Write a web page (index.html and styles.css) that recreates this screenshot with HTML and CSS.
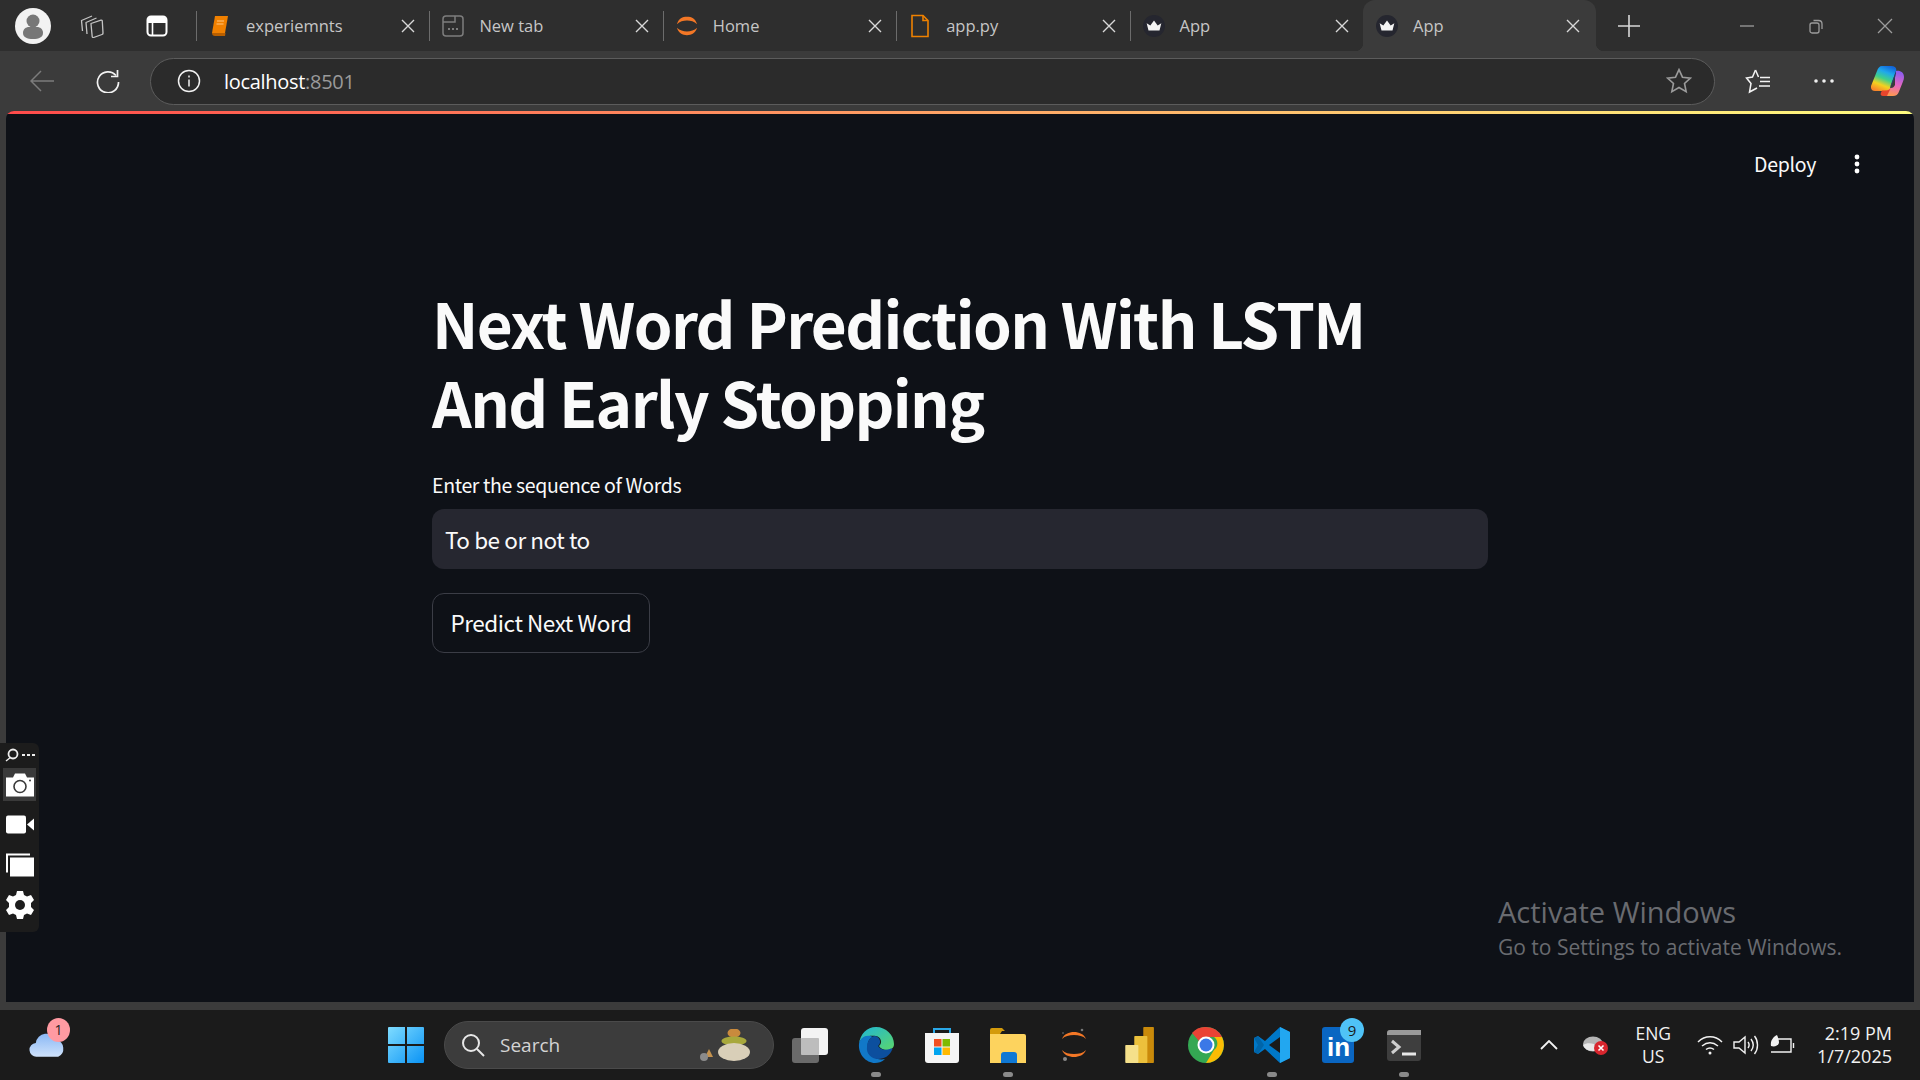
FILE: index.html
```html
<!DOCTYPE html>
<html lang="en">
<head>
  <meta charset="UTF-8" />
  <title>App</title>
  <link rel="stylesheet" href="styles.css">
</head>
<body>
  <div class="tabstrip">
    <div class="strip-btn profile-slot">
      <svg class="profile" viewBox="0 0 36 36"><circle cx="18" cy="18" r="18" fill="#f2f2f2"/><circle cx="18" cy="13" r="6.5" fill="#777"/><path d="M8 25c0-4 3-6 6-6h8c3 0 6 2 6 6 0 4-4 6-10 6S8 29 8 25z" fill="#777"/></svg>
    </div>
    <div class="strip-btn workspace-slot">
      <svg class="icon-24" viewBox="0 0 24 24" fill="none" stroke="#c4c4c4" stroke-width="1.300" stroke-linejoin="round"><path d="M11 9.500 21 6.200a1 1 0 0 1 1.300 1L23 19a1.500 1.500 0 0 1-1 1.500L13.500 23.500a1 1 0 0 1-1.300-1L11 10z"/><path d="M7 20 6 8.500 16.500 4"/><path d="M2.500 17 1.500 6.500 12 2"/></svg>
    </div>
    <div class="strip-btn vtabs-slot">
      <svg class="icon-24" viewBox="0 0 24 24" fill="none" stroke="#fff" stroke-width="2"><rect x="2.500" y="2.500" width="19" height="19" rx="3.500"/><path d="M7.500 8v13" stroke-width="1.600"/><path d="M3 5.500a2.500 2.500 0 0 1 2.500-2.500h13a2.500 2.500 0 0 1 2.500 2.500V9H3z" fill="#fff" stroke="none"/></svg>
    </div>

    <div class="tab">
      <svg class="tab-icon" viewBox="0 0 20 24"><path d="M5 2h13l-3 17H2z" fill="#f08000"/><path d="M2 19c0 2 1 3 3 3h10l.5-3z" fill="#b85f00"/><path d="M7 7h7M6.500 10h7" stroke="#ffc680" stroke-width="1.200"/></svg>
      <span class="tab-title">experiemnts</span>
      <svg class="tab-close" viewBox="0 0 14 14"><path d="M1 1l12 12M13 1L1 13"/></svg>
    </div>
    <div class="tab">
      <svg class="tab-icon" viewBox="0 0 22 24" fill="none" stroke="#7d7d7d" stroke-width="1.500"><rect x="1" y="2" width="20" height="20" rx="3"/><path d="M1 8h12V2"/><path d="M6 15h2M10 15h2M14 15h2" stroke-width="1.800"/></svg>
      <span class="tab-title">New tab</span>
      <svg class="tab-close" viewBox="0 0 14 14"><path d="M1 1l12 12M13 1L1 13"/></svg>
    </div>
    <div class="tab">
      <svg class="tab-icon" viewBox="0 0 24 24" fill="#f37726"><path d="M1 10C3 4 7 2 12 2s9 2 11 8c-3-3-7-4-11-4S4 7 1 10z"/><path d="M1 14c3 3 7 4 11 4s8-1 11-4c-2 6-6 8-11 8S3 20 1 14z"/></svg>
      <span class="tab-title">Home</span>
      <svg class="tab-close" viewBox="0 0 14 14"><path d="M1 1l12 12M13 1L1 13"/></svg>
    </div>
    <div class="tab">
      <svg class="tab-icon" viewBox="0 0 20 24" fill="none" stroke="#ee8100" stroke-width="1.600"><path d="M2 1.500h11l5 5v16H2z"/><path d="M13 1.500v5h5" /></svg>
      <span class="tab-title">app.py</span>
      <svg class="tab-close" viewBox="0 0 14 14"><path d="M1 1l12 12M13 1L1 13"/></svg>
    </div>
    <div class="tab">
      <svg class="tab-icon" viewBox="0 0 24 24"><circle cx="12" cy="12" r="12" fill="#25262f"/><path d="M4 9l4 2.500L12 6l4 5.500L20 9l-2 8H6z" fill="#f4f4f4"/></svg>
      <span class="tab-title">App</span>
      <svg class="tab-close" viewBox="0 0 14 14"><path d="M1 1l12 12M13 1L1 13"/></svg>
    </div>
    <div class="tab active">
      <svg class="tab-icon" viewBox="0 0 24 24"><circle cx="12" cy="12" r="12" fill="#25262f"/><path d="M4 9l4 2.500L12 6l4 5.500L20 9l-2 8H6z" fill="#f4f4f4"/></svg>
      <span class="tab-title">App</span>
      <svg class="tab-close" viewBox="0 0 14 14"><path d="M1 1l12 12M13 1L1 13"/></svg>
    </div>

    <svg class="new-tab" viewBox="0 0 22 22"><path d="M11 0v22M0 11h22"/></svg>
    <div class="window-controls">
      <svg class="win-btn" viewBox="0 0 16 16"><path d="M1 8h14"/></svg>
      <svg class="win-btn" viewBox="0 0 16 16"><rect x="2" y="5" width="9" height="10" rx="2"/><path d="M5.500 2.500h5c2 0 3.500 1.500 3.500 3.500v5"/></svg>
      <svg class="win-btn" viewBox="0 0 16 16"><path d="M1 1l14 14M15 1L1 15"/></svg>
    </div>
  </div>

  <div class="toolbar">
    <div class="tool-slot back-slot">
      <svg class="icon-24" viewBox="0 0 24 24" fill="none" stroke="#7c7c7c" stroke-width="1.500"><path d="M24 12H1M11 2 1 12l10 10"/></svg>
    </div>
    <div class="tool-slot reload-slot">
      <svg class="icon-24" viewBox="0 0 24 24" fill="none" stroke="#f2f2f2" stroke-width="1.700"><path d="M20 6.500A10.500 10.500 0 1 0 22.500 13"/><path d="M21.500 1v6.500H15"/></svg>
    </div>
    <div class="address-bar">
      <svg class="icon-24" viewBox="0 0 24 24" fill="none" stroke="#f2f2f2" stroke-width="1.500"><circle cx="12" cy="12" r="10.500"/><path d="M12 10.500v7M12 6.500v2"/></svg>
      <span class="url"><span class="url-host">localhost</span>:8501</span>
      <svg class="fav-star" viewBox="0 0 24 24" fill="none" stroke="#9a9a9a" stroke-width="1.500"><path d="M12 1.500l3.200 7 7.300.8-5.400 5 1.500 7.500-6.600-3.800-6.600 3.800L6.900 14.300l-5.400-5 7.300-.8z"/></svg>
    </div>
    <div class="tool-slot favorites-slot">
      <svg class="icon-26" viewBox="0 0 26 26" fill="none" stroke="#f4f4f4" stroke-width="1.500"><path d="M10.500 2 7.500 9 1.500 10 6 15.500 4.500 24 12 20"/><path d="M10.500 2 13.500 9"/><path d="M15 9.500h10M15 13.500h10M14 18h11"/></svg>
    </div>
    <div class="tool-slot more-slot">
      <svg class="icon-24" viewBox="0 0 24 24" fill="#f0f0f0"><circle cx="4" cy="12" r="1.800"/><circle cx="12" cy="12" r="1.800"/><circle cx="20" cy="12" r="1.800"/></svg>
    </div>
    <div class="tool-slot copilot-slot">
      <svg class="copilot" viewBox="0 0 33 30">
        <defs>
          <linearGradient id="cpA" x1="0.700" y1="0" x2="0.300" y2="1"><stop offset="0" stop-color="#1268dc"/><stop offset="0.250" stop-color="#1fa8ec"/><stop offset="0.500" stop-color="#3fd08a"/><stop offset="0.750" stop-color="#f4d21f"/><stop offset="1" stop-color="#f9862a"/></linearGradient>
          <linearGradient id="cpB" x1="0.600" y1="0" x2="0.400" y2="1"><stop offset="0" stop-color="#8a5cf0"/><stop offset="0.550" stop-color="#e868c0"/><stop offset="1" stop-color="#ff9a4c"/></linearGradient>
        </defs>
        <path d="M24 5c5-1 9 1 9 6 0 1.500-.3 3-1 4.500l-4 10c-1 3-3 4.500-6 4.500H12l4-8h4c2 0 3-1 4-3z" fill="url(#cpB)"/>
        <path d="M11 0h9c4 0 6 2 5 5l-6 17c-1 2-3 3-5 3H4c-3 0-4.500-2-4-5L6 5c1-3 2.500-5 5-5z" fill="url(#cpA)"/>
        <path d="M12 30c-2 0-3-1.500-2-3.500l1-2h4c2 0 4-1 5-3l-4 8.500z" fill="#e8452c"/>
        <path d="M25 5c.5 3-1 7-3 11l-3 6c1-4 3-9 4.500-13 .5-1.500.8-3 1.500-4z" fill="#26406e"/>
      </svg>
    </div>
  </div>

  <div class="viewport">
    <div class="decoration"></div>
    <header class="app-header">
      <span class="deploy">Deploy</span>
      <svg class="kebab" viewBox="0 0 6 20" fill="#fff"><circle cx="3" cy="3" r="2.400"/><circle cx="3" cy="10" r="2.400"/><circle cx="3" cy="17" r="2.400"/></svg>
    </header>
    <main class="block">
      <h1>Next Word Prediction With LSTM And Early Stopping</h1>
      <label class="field-label" for="words">Enter the sequence of Words</label>
      <input id="words" class="text-input" type="text" value="To be or not to" />
      <button class="predict-btn" type="button">Predict Next Word</button>
    </main>

    <div class="activate">
      <div class="activate-title">Activate Windows</div>
      <div class="activate-sub">Go to Settings to activate Windows.</div>
    </div>
  </div>

  <div class="capture-widget">
    <svg class="widget-top" viewBox="0 0 30 14"><circle cx="8" cy="6" r="4.500" fill="none" stroke="#eee" stroke-width="1.800"/><path d="M1 13l5-4" stroke="#eee" stroke-width="1.400"/><path d="M17 6h3v2h-3zM22 6h3v2h-3zM27 6h3v2h-3z" fill="#eee"/></svg>
    <div class="widget-btn selected">
      <svg class="widget-icon" viewBox="0 0 30 24"><path d="M1 5h7l2-4h10l2 4h7v19H1z" fill="#fff"/><circle cx="15" cy="14" r="6" fill="none" stroke="#3a3a3a" stroke-width="1.600"/><circle cx="25" cy="8" r="1" fill="#3a3a3a"/></svg>
    </div>
    <div class="widget-btn">
      <svg class="widget-icon" viewBox="0 0 30 24"><rect x="1" y="3" width="20" height="18" rx="2" fill="#fff"/><path d="M22 12l7-6v12z" fill="#fff"/></svg>
    </div>
    <div class="widget-btn">
      <svg class="widget-icon" viewBox="0 0 30 24"><path d="M1 1h24v2H3v17H1z" fill="#fff"/><rect x="5" y="5" width="24" height="19" fill="#fff"/></svg>
    </div>
    <div class="widget-btn">
      <svg class="widget-gear" viewBox="0 0 30 30"><path d="M12 1h6l1 4 3 1.500 4-1.500 3 5-3 3v4l3 3-3 5-4-1.500-3 1.500-1 4h-6l-1-4-3-1.500-4 1.500-3-5 3-3v-4L1 10l3-5 4 1.500L11 5z" fill="#fff"/><circle cx="15" cy="15" r="5" fill="#1c1c1c"/></svg>
    </div>
  </div>

  <footer class="taskbar">
    <div class="weather">
      <svg class="weather-cloud" viewBox="0 0 38 28"><defs><linearGradient id="cl" x1="0" y1="0" x2="0" y2="1"><stop offset="0" stop-color="#8ab8f5"/><stop offset="1" stop-color="#cfe2fb"/></linearGradient></defs><path d="M8 27a7 7 0 0 1-1-14 11 11 0 0 1 21-3 9 9 0 0 1 2 17z" fill="url(#cl)"/></svg>
      <span class="weather-badge">1</span>
    </div>
    <div class="task-slot start-slot">
      <svg class="icon-36" viewBox="0 0 36 36"><defs><linearGradient id="wn" x1="0" y1="0" x2="1" y2="1"><stop offset="0" stop-color="#7fdcff"/><stop offset="1" stop-color="#0a93f5"/></linearGradient></defs><path d="M0 1a1 1 0 0 1 1-1h16v17H0zM19 0h16a1 1 0 0 1 1 1v16H19zM0 19h17v17H1a1 1 0 0 1-1-1zM19 19h17v16a1 1 0 0 1-1 1H19z" fill="url(#wn)"/></svg>
    </div>
    <div class="search-pill">
      <svg class="icon-24" viewBox="0 0 24 24" fill="none" stroke="#e8e8e8" stroke-width="2"><circle cx="10" cy="10" r="8"/><path d="M16 16l7 7"/></svg>
      <span class="search-label">Search</span>
      <svg class="pebbles" viewBox="0 0 50 32"><ellipse cx="34" cy="4" rx="6.500" ry="4.500" fill="#c98a3d"/><ellipse cx="34" cy="12" rx="12.500" ry="4.500" fill="#a8a83c"/><ellipse cx="34" cy="23" rx="16" ry="9" fill="#d9cfb8"/><path d="M5 28l4-8 4 8z" fill="#c4924e"/><circle cx="4" cy="28" r="4" fill="#8b8b8b"/></svg>
    </div>
    <div class="task-slot">
      <svg class="icon-36" viewBox="0 0 36 36"><rect x="0" y="11" width="27" height="25" rx="3" fill="#6a6a6a"/><rect x="9" y="1" width="27" height="27" rx="3" fill="#f3f3f3"/><rect x="9" y="11" width="18" height="17" rx="1" fill="#bdbdbd"/></svg>
    </div>
    <div class="task-slot open">
      <svg class="icon-36" viewBox="0 0 36 36"><defs><linearGradient id="eg" x1="0" y1="0" x2="1" y2="1"><stop offset="0" stop-color="#1fb6d6"/><stop offset="1" stop-color="#5bd66c"/></linearGradient></defs><path d="M1 17C2 7 9 0 18 0c10 0 18 8 18 17 0 4-3 6-7 6-4 0-7-2-8-4 4-3 2-9-3-10C11 8 2 10 1 17z" fill="url(#eg)"/><path d="M1 17c1-7 8-10 14-7-3 1-6 4-5 10 1 8 8 14 17 12-3 3-7 4-10 4C8 36 0 27 1 17z" fill="#1178c8"/><path d="M17 9c5 1 7 7 3 10 2 3 6 5 12 3 2-1 3 0 2 1-2 5-7 9-14 9-7 0-12-6-11-12 0-6 4-11 8-11z" fill="#0c4f9e"/></svg>
    </div>
    <div class="task-slot">
      <svg class="icon-36" viewBox="0 0 36 36"><path d="M10 6V2h16v4" fill="none" stroke="#2aa8e8" stroke-width="2"/><path d="M1 6h34v27a3 3 0 0 1-3 3H4a3 3 0 0 1-3-3z" fill="#f5f5f5"/><rect x="10" y="12" width="7.500" height="7.500" fill="#f25022"/><rect x="18.500" y="12" width="7.500" height="7.500" fill="#7fba00"/><rect x="10" y="20.500" width="7.500" height="7.500" fill="#00a4ef"/><rect x="18.500" y="20.500" width="7.500" height="7.500" fill="#ffb900"/></svg>
    </div>
    <div class="task-slot open">
      <svg class="icon-36" viewBox="0 0 36 36"><path d="M0 3a2 2 0 0 1 2-2h10l3 3h-3L10 7H0z" fill="#d49b0c"/><path d="M0 7h34a2 2 0 0 1 2 2v27H0z" fill="#fdd35e"/><path d="M11 28a3 3 0 0 1 3-3h10a3 3 0 0 1 3 3v8H11z" fill="#0f78d4"/></svg>
    </div>
    <div class="task-slot">
      <svg class="icon-36" viewBox="0 0 36 36"><path d="M6 12C8 7 13 5 18 5s10 2 12 7c-3-3-7-4-12-4S9 9 6 12z" fill="#f37726"/><path d="M6 23c3 3 7 4 12 4s9-1 12-4c-2 5-7 7-12 7S8 28 6 23z" fill="#f37726"/><circle cx="26" cy="3" r="1.300" fill="#777"/><circle cx="7" cy="6" r="1" fill="#555"/><circle cx="9" cy="32" r="2" fill="#888"/></svg>
    </div>
    <div class="task-slot">
      <svg class="icon-36" viewBox="0 0 36 44"><rect x="22" y="0" width="13" height="44" rx="1" fill="#c98a0a"/><rect x="11" y="11" width="16" height="33" rx="1" fill="#ecc13c"/><rect x="0" y="22" width="16" height="22" rx="1" fill="#f5e08a"/></svg>
    </div>
    <div class="task-slot">
      <svg class="icon-36" viewBox="0 0 36 36"><circle cx="18" cy="18" r="18" fill="#34a853"/><path d="M18 0a18 18 0 0 1 16 10H18a8 8 0 0 0-7 4L4 6A18 18 0 0 1 18 0z" fill="#ea4335"/><path d="M34 10a18 18 0 0 1-16 26l8-13a8 8 0 0 0 0-13z" fill="#fbbc04"/><circle cx="18" cy="18" r="8.500" fill="#fff"/><circle cx="18" cy="18" r="6.500" fill="#3b78e7"/></svg>
    </div>
    <div class="task-slot open">
      <svg class="icon-36" viewBox="0 0 36 36"><path d="M26 0l10 5v26l-10 5-15-14-7 5-4-2V11l4-2 7 5z" fill="#0078c8"/><path d="M26 0l10 5v26l-10 5z" fill="#22a7f0"/><path d="M26 10 15 18l11 8z" fill="#1a1a1a"/><path d="M0 11l4-2 6 9-6 9-4-2 4-7z" fill="#0065a9"/></svg>
    </div>
    <div class="task-slot">
      <div class="linkedin">
        <span class="linkedin-in">in</span>
        <span class="linkedin-badge">9</span>
      </div>
    </div>
    <div class="task-slot open">
      <svg class="icon-36" viewBox="0 0 36 36"><rect x="1" y="3" width="34" height="31" rx="3" fill="#3e3e3e"/><path d="M1 6a3 3 0 0 1 3-3h31v5H1z" fill="#9a9a9a"/><path d="M6 14l7 6-7 6" fill="none" stroke="#cfcfcf" stroke-width="3"/><path d="M16 27h14" stroke="#e8e8e8" stroke-width="3"/></svg>
    </div>

    <div class="tray">
      <svg class="tray-chevron" viewBox="0 0 18 10" fill="none" stroke="#f2f2f2" stroke-width="1.800"><path d="M1 9l8-8 8 8"/></svg>
      <svg class="tray-onedrive" viewBox="0 0 26 22"><ellipse cx="10" cy="10" rx="10" ry="7.500" fill="#b5b5b5"/><path d="M0 11c2 5 6 6 14 6l-3-7C7 9 3 9 0 11z" fill="#e8e8e8"/><circle cx="18" cy="14" r="7" fill="#d9262e"/><path d="M15.500 11.500l5 5M20.500 11.500l-5 5" stroke="#fff" stroke-width="1.600"/></svg>
      <div class="tray-lang"><span>ENG</span><span>US</span></div>
      <svg class="tray-wifi" viewBox="0 0 26 20" fill="none" stroke="#f2f2f2" stroke-width="1.500"><path d="M1 7c7-7 17-7 24 0M5 11c5-4 11-4 16 0M9 14.500c2.500-2 5.500-2 8 0"/><circle cx="13" cy="18" r="1.500" fill="#f2f2f2" stroke="none"/></svg>
      <svg class="tray-volume" viewBox="0 0 26 22" fill="none" stroke="#f2f2f2" stroke-width="1.400"><path d="M1 8h5l6-5v16l-6-5H1z"/><path d="M15 8c1.500 2 1.500 4 0 6M18 5c3 4 3 8 0 12M21.500 2c4 5 4 13 0 18"/></svg>
      <svg class="tray-battery" viewBox="0 0 26 22" fill="none" stroke="#f2f2f2" stroke-width="1.400"><path d="M8 5h14v13H2"/><path d="M24.500 9v5"/><path d="M8 1C4 3 1 7 2 12c3 1 7 0 8-3 0-3-1-6-2-8z" fill="#f2f2f2" stroke="none"/></svg>
      <div class="tray-clock"><span>2:19 PM</span><span>1/7/2025</span></div>
    </div>
  </footer>
</body>
</html>
```
FILE: styles.css
```css
* {
  margin: 0;
  padding: 0;
  box-sizing: border-box;
}

html, body {
  height: 100%;
  overflow: hidden;
}

body {
  background-color: #3b3b3b;
  display: flex;
  flex-direction: column;
  height: 1080px;
  position: relative;
  font-family: 'Open Sans', sans-serif;
}

svg {
  display: block;
  flex-shrink: 0;
}

.icon-24 { width: 24px; height: 24px; }
.icon-26 { width: 26px; height: 26px; }
.icon-36 { width: 36px; height: 36px; }

/* tab strip */
.tabstrip {
  height: 51px;
  background: #2e2e2e;
  display: flex;
  align-items: center;
  flex-shrink: 0;
}

.strip-btn {
  display: flex;
  align-items: center;
  justify-content: center;
  height: 100%;
}

.profile-slot { width: 66px; }
.workspace-slot { width: 52px; }
.vtabs-slot { width: 78px; }

.profile { width: 36px; height: 36px; }

.tab {
  width: 233.4px;
  height: 100%;
  display: flex;
  align-items: center;
  padding-left: 13px;
  position: relative;
}

.tab::before {
  content: "";
  position: absolute;
  left: 0;
  top: 11px;
  bottom: 10px;
  width: 1px;
  background: #6c6c6c;
}

.tab-icon {
  width: 22px;
  height: 24px;
  margin-right: 15px;
}

.tab-title {
  flex: 1;
  color: #c6c6c6;
  font-size: 16.5px;
  line-height: 24px;
}

.tab-close {
  width: 14px;
  height: 14px;
  margin-right: 14px;
  fill: none;
  stroke: #d8d8d8;
  stroke-width: 1.4;
}

.tab.active {
  background: #3b3b3b;
  border-radius: 12px 12px 0 0;
}

.tab.active .tab-close {
  margin-right: 16px;
}

/* small flared corners at the foot of the active tab */
.tab.active::before,
.tab.active::after {
  content: "";
  position: absolute;
  top: auto;
  bottom: 0;
  width: 8px;
  height: 8px;
  background: radial-gradient(circle at 0 0, transparent 8px, #3b3b3b 8.5px);
}

.tab.active::before {
  left: -8px;
}

.tab.active::after {
  right: -8px;
  background: radial-gradient(circle at 100% 0, transparent 8px, #3b3b3b 8.5px);
}

.new-tab {
  width: 22px;
  height: 22px;
  margin-left: 22px;
  fill: none;
  stroke: #d8d8d8;
  stroke-width: 1.6;
}

.window-controls {
  margin-left: auto;
  display: flex;
  gap: 53px;
  padding-right: 27px;
}

.win-btn {
  width: 16px;
  height: 16px;
  fill: none;
  stroke: #9c9c9c;
  stroke-width: 1.3;
}

/* toolbar */
.toolbar {
  height: 60px;
  display: flex;
  align-items: center;
  flex-shrink: 0;
}

.tool-slot {
  display: flex;
  align-items: center;
  justify-content: center;
  height: 100%;
}

.back-slot { width: 84px; }
.reload-slot { width: 48px; }
.favorites-slot { width: 86px; }
.more-slot { width: 46px; }
.copilot-slot { width: 73px; padding-left: 8px; }

.copilot { width: 33px; height: 30px; }

.address-bar {
  width: 1565px;
  height: 47px;
  margin-left: 18px;
  background: #2b2b2b;
  border: 1.5px solid #5c5c5c;
  border-radius: 24px;
  display: flex;
  align-items: center;
  padding: 0 22px 0 26px;
}

.url {
  flex: 1;
  margin-left: 23px;
  color: #9a9a9a;
  font-size: 20px;
  letter-spacing: -0.3px;
}

.url-host {
  color: #fff;
}

.fav-star { width: 26px; height: 26px; }

/* streamlit page */
.viewport {
  flex: 1;
  margin: 0 6px;
  background: #0e1117;
  border-radius: 8px 8px 0 0;
  position: relative;
  overflow: hidden;
  font-family: 'Noto Sans CJK SC', 'Noto Sans', sans-serif;
  color: #fafafa;
}

.decoration {
  height: 3px;
  background: linear-gradient(90deg, #ff4b4b, #fffd80);
}

.app-header {
  height: 100px;
  display: flex;
  align-items: center;
  justify-content: flex-end;
  padding: 0 54px 0 0;
  gap: 38px;
}

.deploy {
  font-size: 19.5px;
  line-height: 30px;
  letter-spacing: -0.3px;
}

.kebab { width: 6px; height: 20px; }

.block {
  width: 1056px;
  margin: 69px 0 0 426px;
  display: flex;
  flex-direction: column;
  align-items: flex-start;
}

h1 {
  font-size: 62px;
  font-weight: 700;
  line-height: 79px;
  letter-spacing: -1.6px;
  color: #fafafa;
  margin-bottom: 29px;
}

.field-label {
  font-size: 19.5px;
  line-height: 30px;
  letter-spacing: -0.35px;
  margin-bottom: 9px;
}

.text-input {
  width: 100%;
  height: 60px;
  background: #262730;
  border: none;
  border-radius: 12px;
  padding: 0 13px;
  color: #fafafa;
  font-family: inherit;
  font-size: 22.5px;
  letter-spacing: -0.45px;
}

.predict-btn {
  margin-top: 24px;
  width: 218px;
  height: 60px;
  padding-bottom: 2px;
  background: #0e1117;
  border: 1.5px solid #3b3d46;
  border-radius: 12px;
  color: #fafafa;
  font-family: inherit;
  font-size: 22.5px;
  letter-spacing: -0.45px;
}

.activate {
  position: absolute;
  left: 1492px;
  top: 782px;
  color: #696b70;
  font-family: 'Open Sans', sans-serif;
}

.activate-title {
  font-size: 29px;
  line-height: 38px;
}

.activate-sub {
  font-size: 21px;
  line-height: 32px;
}

/* screenshot tool over the page */
.capture-widget {
  position: absolute;
  left: 0;
  top: 743px;
  width: 39px;
  height: 189px;
  background: #1c1c1c;
  border-radius: 0 6px 6px 0;
  padding: 5px 3px 0;
}

.widget-top {
  width: 30px;
  height: 14px;
  margin: 0 0 6px 2px;
}

.widget-btn {
  height: 33px;
  margin-bottom: 7px;
  display: flex;
  align-items: center;
  justify-content: center;
}

.widget-btn.selected {
  background: #3a3a3a;
}

.widget-icon {
  width: 30px;
  height: 25px;
}

.widget-gear {
  width: 30px;
  height: 30px;
}

/* taskbar */
.taskbar {
  height: 70px;
  margin-top: 8px;
  background: #1b1b1b;
  display: flex;
  align-items: center;
  flex-shrink: 0;
}

.weather {
  width: 373px;
  height: 100%;
  position: relative;
}

.weather-cloud {
  position: absolute;
  left: 29px;
  top: 20px;
  width: 37px;
  height: 28px;
}

.weather-badge {
  position: absolute;
  left: 47px;
  top: 8px;
  width: 23px;
  height: 24px;
  background: #ff9aa2;
  border-radius: 50%;
  color: #222;
  font-size: 14px;
  line-height: 24px;
  text-align: center;
}

.task-slot {
  width: 66px;
  height: 100%;
  display: flex;
  align-items: center;
  justify-content: center;
  position: relative;
}

.task-slot.open::after {
  content: "";
  position: absolute;
  left: 28px;
  bottom: 3px;
  width: 10px;
  height: 5px;
  border-radius: 3px;
  background: #8a8a8a;
}

.start-slot {
  margin-right: 5px;
}

.search-pill {
  width: 330px;
  height: 48px;
  margin-right: 3px;
  background: #3c3c3c;
  border: 1.5px solid #4a4a4a;
  border-radius: 24px;
  display: flex;
  align-items: center;
  padding: 0 23px 0 16px;
}

.search-label {
  flex: 1;
  margin-left: 15px;
  color: #d4d4d4;
  font-size: 19px;
}

.pebbles { width: 50px; height: 32px; }

.linkedin {
  width: 32px;
  height: 36px;
  background: #0a66c2;
  border-radius: 3px;
  position: relative;
}

.linkedin-in {
  position: absolute;
  left: 5px;
  bottom: 2px;
  color: #fff;
  font-family: 'Liberation Sans', sans-serif;
  font-weight: 700;
  font-size: 26px;
  line-height: 28px;
}

.linkedin-badge {
  position: absolute;
  left: 18px;
  top: -9px;
  width: 24px;
  height: 24px;
  background: #4fc3f7;
  border-radius: 50%;
  color: #1a1a1a;
  font-size: 15px;
  line-height: 24px;
  text-align: center;
}

.tray {
  margin-left: auto;
  display: flex;
  align-items: center;
  height: 100%;
  padding-right: 28px;
  color: #f2f2f2;
}

.tray-chevron { width: 18px; height: 10px; margin-right: 25px; }
.tray-onedrive { width: 26px; height: 22px; margin-right: 26px; }
.tray-wifi { width: 26px; height: 20px; margin-right: 10px; }
.tray-volume { width: 26px; height: 22px; margin-right: 10px; }
.tray-battery { width: 26px; height: 22px; margin-right: 22px; }

.tray-lang,
.tray-clock {
  display: flex;
  flex-direction: column;
  font-size: 18px;
  line-height: 23px;
}

.tray-lang {
  align-items: center;
  font-size: 17.5px;
  margin-right: 26px;
}

.tray-clock {
  align-items: flex-end;
}
```
